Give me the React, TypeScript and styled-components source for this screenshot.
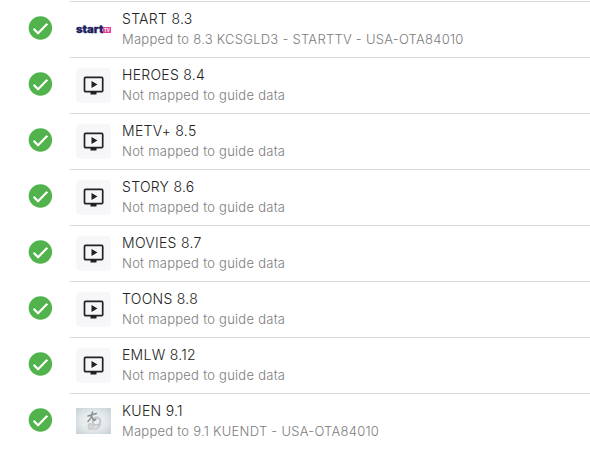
import React from "react";
import styled, { createGlobalStyle } from "styled-components";

const GlobalStyle = createGlobalStyle`
  *, *::before, *::after { box-sizing: border-box; }
  body { margin: 0; background: #fff; font-family: Inter, sans-serif; overflow: hidden; }
`;

const List = styled.ul`
  list-style: none;
  margin: 0;
  padding: 1px 0 0;
  height: 449px;
  overflow: hidden;
`;

const Row = styled.li`
  display: flex;
  height: 56px;
`;

const Status = styled.div`
  width: 70px;
  flex: none;
  padding: 13px 0 0 26px;
  svg { display: block; }
`;

const Content = styled.div`
  flex: 1;
  display: flex;
  gap: 11px;
  padding: 10px 0 0 6px;
  border-top: 1px solid #dadada;
`;

const Thumb = styled.div<{ $filled?: boolean }>`
  width: 35px;
  height: 35px;
  flex: none;
  display: flex;
  align-items: center;
  justify-content: center;
  border-radius: 5px;
  background: ${(p) => (p.$filled ? "#f7f7f9" : "transparent")};
  svg { display: block; }
`;

const Text = styled.div`
  white-space: nowrap;
`;

const Title = styled.div`
  height: 20px;
  margin-top: -3px;
  font-size: 14px;
  line-height: 20px;
  font-weight: 300;
  letter-spacing: 0.28px;
  color: #222;
`;

const Subtitle = styled.div`
  height: 20px;
  font-size: 13px;
  line-height: 20px;
  font-weight: 300;
  letter-spacing: 0.26px;
  color: #7c7c7c;
`;

const StartLogo = () => (
  <svg width="35" height="35" viewBox="0 0 35 35">
    <text x="0" y="20.9" fontFamily="Inter, sans-serif" fontWeight="900" fontSize="9.8" fill="#1d2160" stroke="#1d2160" strokeWidth="0.3" textLength="27.4" lengthAdjust="spacingAndGlyphs">
      start
    </text>
    <rect x="27" y="15" width="8" height="6" fill="#e83e92" />
    <text x="28" y="19.9" fontFamily="Inter, sans-serif" fontWeight="700" fontSize="5" fill="#fff" textLength="6" lengthAdjust="spacingAndGlyphs">
      TV
    </text>
  </svg>
);

const KuenLogo = () => (
  <svg width="35" height="35" viewBox="0 0 35 35">
    <defs>
      <radialGradient id="kuen" cx="50%" cy="50%" r="68%">
        <stop offset="0" stopColor="#f1f4f5" />
        <stop offset="0.5" stopColor="#e5eaec" />
        <stop offset="1" stopColor="#c8d1d6" />
      </radialGradient>
    </defs>
    <rect y="4" width="35" height="26" fill="url(#kuen)" />
    <g fill="none" strokeLinecap="round">
      <circle cx="20.500" cy="17.300" r="3.800" stroke="#c2c4c5" strokeWidth="1.900" />
      <path d="M24.300 17.500c0.200 4-1.300 6.500-5 7.500" stroke="#c8cacb" strokeWidth="1.900" />
      <rect x="12.500" y="20" width="5" height="5" rx="1.500" fill="#d6d8d8" stroke="#cbcdce" strokeWidth="1.800" />
      <path d="M12 12l8.500-2.500M16.500 8l-1.500 6-3 3.500M15.800 12.500l2 4 2-1" stroke="#8c8f90" strokeWidth="1.500" />
    </g>
  </svg>
);

const VideoIcon = () => (
  <svg width="24" height="24" viewBox="-0.5 -0.5 24 24" fill="none">
    <rect x="2" y="2.9" width="18.200" height="14.200" rx="1" stroke="#222227" strokeWidth="1.700" />
    <path d="M8 17.500h6v2.500h-6zM9 6.500v7l6-3.500z" fill="#202024" />
  </svg>
);

const CheckIcon = () => (
  <svg width="28" height="28" viewBox="0 0 28 28">
    <circle cx="14.400" cy="14" r="11.700" fill="#50b34b" />
    <path d="M7.600 14.700l4.500 4.500 9.200-9.400" fill="none" stroke="#fff" strokeWidth="2.200" />
  </svg>
);

type Logo = "start" | "video" | "kuen";

const unmapped = "Not mapped to guide data";

const channels: { name: string; guide: string; logo: Logo }[] = [
  { name: "START 8.3", guide: "Mapped to 8.3 KCSGLD3 - STARTTV - USA-OTA84010", logo: "start" },
  { name: "HEROES 8.4", guide: unmapped, logo: "video" },
  { name: "METV+ 8.5", guide: unmapped, logo: "video" },
  { name: "STORY 8.6", guide: unmapped, logo: "video" },
  { name: "MOVIES 8.7", guide: unmapped, logo: "video" },
  { name: "TOONS 8.8", guide: unmapped, logo: "video" },
  { name: "EMLW 8.12", guide: unmapped, logo: "video" },
  { name: "KUEN 9.1", guide: "Mapped to 9.1 KUENDT - USA-OTA84010", logo: "kuen" },
];

const logos = { start: StartLogo, video: VideoIcon, kuen: KuenLogo };

export default function App() {
  return (
    <>
      <GlobalStyle />
      <List>
        {channels.map(({ name, guide, logo }) => {
          const LogoArt = logos[logo];
          return (
            <Row key={name}>
              <Status>
                <CheckIcon />
              </Status>
              <Content>
                <Thumb $filled={logo === "video"}>
                  <LogoArt />
                </Thumb>
                <Text>
                  <Title>{name}</Title>
                  <Subtitle>{guide}</Subtitle>
                </Text>
              </Content>
            </Row>
          );
        })}
      </List>
    </>
  );
}
